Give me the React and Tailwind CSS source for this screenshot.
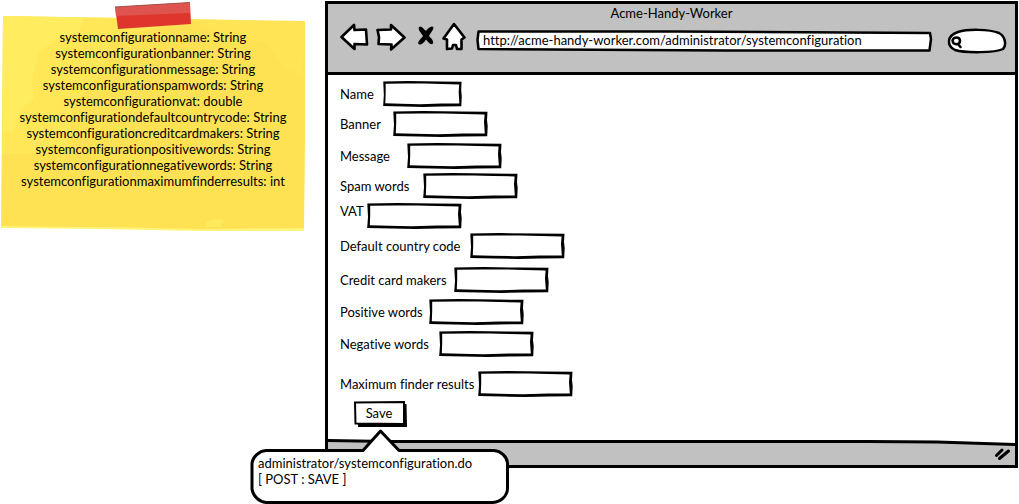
import React from "react";

const attributes = [
  "systemconfigurationname: String",
  "systemconfigurationbanner: String",
  "systemconfigurationmessage: String",
  "systemconfigurationspamwords: String",
  "systemconfigurationvat: double",
  "systemconfigurationdefaultcountrycode: String",
  "systemconfigurationcreditcardmakers: String",
  "systemconfigurationpositivewords: String",
  "systemconfigurationnegativewords: String",
  "systemconfigurationmaximumfinderresults: int",
];

const fields = [
  { id: "name", label: "Name", row: "items-center", labelWidth: "w-[43px]", inputWidth: "w-[79px]" },
  { id: "banner", label: "Banner", row: "mt-1 items-center", labelWidth: "w-[53px]", inputWidth: "w-[95px]" },
  { id: "message", label: "Message", row: "mt-1.5 items-center", labelWidth: "w-[67px]", inputWidth: "w-[95px]" },
  { id: "spam", label: "Spam words", row: "mt-1 items-center", labelWidth: "w-[83px]", inputWidth: "w-[95px]" },
  { id: "vat", label: "VAT", row: "mt-1 items-start", labelWidth: "w-[27px]", inputWidth: "w-[95px]" },
  { id: "country", label: "Default country code", row: "mt-1 items-center", labelWidth: "w-[130px]", inputWidth: "w-[95px]" },
  { id: "makers", label: "Credit card makers", row: "mt-2 items-center", labelWidth: "w-[114px]", inputWidth: "w-[95px]" },
  { id: "positive", label: "Positive words", row: "mt-1.5 items-center", labelWidth: "w-[89px]", inputWidth: "w-[95px]" },
  { id: "negative", label: "Negative words", row: "mt-1.5 items-center", labelWidth: "w-[99px]", inputWidth: "w-[95px]" },
  { id: "maximum", label: "Maximum finder results", row: "mt-3.5 items-center", labelWidth: "w-[138px]", inputWidth: "w-[95px]" },
];

function SketchFrame() {
  return (
    <svg className="absolute inset-0 h-full w-full" viewBox="0 0 95 26" preserveAspectRatio="none" aria-hidden="true">
      <path d="M.3 .5 30 0 68 .6 94.500 .8 94 9 94.700 15 94.200 25.200 70 25.400 48 26 25 25.600 .2 25 1 14Z" fill="#000" />
      <path d="M3.200 2.800 28 2.600 50 2.400 70 3 91.600 3.400 91 11 91.800 22.400 70 22.600 45 23.200 22 22.800 2.800 22.200 3.200 12Z" fill="#fff" />
    </svg>
  );
}

function StickyNote() {
  return (
    <section className="relative h-[231px] w-[306px] shrink-0">
      <svg className="absolute inset-0 h-full w-full" viewBox="0 0 306 231" aria-hidden="true">
        <path d="M3 15 120 17 305 20 305 140 304 229 200 229 100 227 1 226 2 120Z" fill="#ffe254" />
        <path d="M3 15 190 18 150 28 110 40 100 75 72 104 68 152 2 153Z" fill="#ffea59" opacity=".7" />
        <path d="M3 15 84 17 80 30 60 36 38 52 32 80 34 98 20 110 14 130 3 132Z" fill="#fff264" opacity=".6" />
        <path d="M190 18 304 21 303 76 284 66 266 42 225 36Z" fill="#ffe858" opacity=".5" />
        <path d="M1 225 70 226 100 226 200 228 304 227 304 230 200 230 100 228 1 227Z" fill="#fff47a" />
        <path d="M206 221 216 218 225 219 220 226 206 226Z" fill="#ffe95c" />
        <path d="M115 6 190 1.500 191 23 118 28 117 20Z" fill="#de352d" />
        <path d="M115 6 190 1.500 190 12 116 15Z" fill="#dd554e" />
        <path d="M115 6 190 1.500" stroke="#a6534e" strokeWidth="1" />
      </svg>
      <ul className="relative pt-[28px] text-center">
        {attributes.map((text) => (
          <li key={text} className="whitespace-nowrap">{text}</li>
        ))}
      </ul>
    </section>
  );
}

const navButtons = [
  {
    label: "Back",
    box: "w-[29px]",
    view: "0 0 29 30",
    drawing: <path d="M1.500 15 14 3 14.500 8 26 7.500 27 22.500 14.500 22 14.500 27Z" fill="#fff" stroke="#000" strokeWidth="2.600" strokeLinejoin="round" />,
  },
  {
    label: "Forward",
    box: "ml-[7px] w-[30px]",
    view: "0 0 30 30",
    drawing: <path d="M1.500 8 15 7.500 15 3 28.500 15.500 15 27.500 15.500 22.500 2.500 22 3 15Z" fill="#fff" stroke="#000" strokeWidth="2.600" strokeLinejoin="round" />,
  },
  {
    label: "Stop",
    box: "ml-[11px] w-[18px]",
    view: "0 0 18 30",
    drawing: <path d="M2 5C4 3 7 7 9 9C11 6 15 3 16.500 5.500C16.500 8 13.500 11 12 14C14 16 17 19 16 21.500C13.500 24 10.500 19 9 17.500C7.500 20 4 24 1.500 22C0 19.500 5 16 6 14C4 11 .5 7 2 5Z" fill="#000" />,
  },
  {
    label: "Home",
    box: "ml-[7px] w-[24px]",
    view: "0 0 24 30",
    drawing: <path d="M12 2 22.500 15.500 19.500 17.500 19.500 27 15 27 14 23 11 23 10 26.500 5 27 5 17.500 1.500 16.500Z" fill="#fff" stroke="#000" strokeWidth="2.600" strokeLinejoin="round" />,
  },
];

function BrowserHeader() {
  return (
    <header className="border-b-[3px] border-black bg-[#c1c1c1] pb-[18px]">
      <h1 className="pt-px text-center">Acme-Handy-Worker</h1>
      <div className="flex items-start pt-px pr-2 pl-3">
        {navButtons.map((item) => (
          <button key={item.label} type="button" aria-label={item.label} className={`h-[30px] shrink-0 ${item.box}`}>
            <svg className="h-full w-full" viewBox={item.view} aria-hidden="true">{item.drawing}</svg>
          </button>
        ))}
        <div className="relative mt-2 ml-2.5 h-[22px] min-w-0 flex-1">
          <svg className="absolute inset-0 h-full w-full" viewBox="0 0 456 22" preserveAspectRatio="none" aria-hidden="true">
            <path d="M2.500 1.500 200 1.500 453 3 454 9 452.500 20.500 250 20.500 2.500 19 1.500 10Z" fill="#fff" stroke="#000" strokeWidth="2.500" strokeLinejoin="round" />
          </svg>
          <input
            aria-label="Address"
            type="text"
            defaultValue="http://acme-handy-worker.com/administrator/systemconfiguration"
            className="relative block h-5 w-full bg-transparent px-[7px] text-[13px] leading-4 outline-none"
          />
        </div>
        <div className="relative mt-1.5 ml-[14px] h-[26px] w-[60px] shrink-0">
          <svg className="absolute inset-0 h-full w-full" viewBox="0 0 60 26" aria-hidden="true">
            <path d="M11 4C20 1 42 1 52 5C58 8 60 17 56 21C48 25 18 25 8 22C0 18-1 8 11 4Z" fill="#fff" stroke="#000" strokeWidth="2.500" />
            <path d="M5.500 12.500C6.500 8.500 12.500 8.500 13 12.500C13 17.500 6 17.500 5.500 12.500ZM11 16 13.500 19" fill="none" stroke="#000" strokeWidth="2.500" strokeLinecap="round" />
          </svg>
          <input aria-label="Search" type="search" className="relative h-full w-full bg-transparent pr-2 pl-5 outline-none" />
        </div>
      </div>
    </header>
  );
}

function ConfigurationForm() {
  return (
    <form className="pt-[6px] pb-[11px] pl-3" onSubmit={(event) => event.preventDefault()}>
      {fields.map((field) => (
        <div key={field.id} className={`flex ${field.row}`}>
          <label htmlFor={field.id} className={`shrink-0 whitespace-nowrap ${field.labelWidth}`}>{field.label}</label>
          <div className={`relative h-[26px] ${field.inputWidth}`}>
            <SketchFrame />
            <input id={field.id} type="text" className="relative h-full w-full bg-transparent px-2 outline-none" />
          </div>
        </div>
      ))}
      <div className="relative mt-1 ml-[14px] w-[53px]">
        <button type="submit" className="relative block h-[27px] w-full pr-[3px] pb-[3px]">
          <svg className="absolute inset-0 h-full w-full" viewBox="0 0 53 27" aria-hidden="true">
            <path d="M4 4 52.500 3 53 26 4 26Z" fill="#000" />
            <path d="M1 1.500 50 1 50 23 1.500 22.500Z" fill="#fff" stroke="#000" strokeWidth="2" />
          </svg>
          <span className="relative">Save</span>
        </button>
        <aside className="absolute top-[28px] left-[-104px] z-10 h-[75px] w-[260px] px-2 pt-[26px]">
          <svg className="absolute inset-0 h-full w-full" viewBox="0 0 260 75" aria-hidden="true">
            <path d="M16 21.500H113L130.500 2 149 21.500H244C251 22 257 28 257.500 34V60C257 67 251 73 243 73.500H16C9 73 3 67 2 60V34C3 28 9 22 16 21.500Z" fill="#fff" stroke="#000" strokeWidth="3" strokeLinejoin="round" />
          </svg>
          <p className="relative whitespace-nowrap">administrator/systemconfiguration.do</p>
          <p className="relative whitespace-nowrap">[ POST : SAVE ]</p>
        </aside>
      </div>
    </form>
  );
}

function StatusBar() {
  return (
    <footer className="relative flex h-[26px] items-end justify-end pr-1 pb-1">
      <svg className="absolute inset-0 h-full w-full" viewBox="0 0 688 26" preserveAspectRatio="none" aria-hidden="true">
        <path d="M0 1.500 60 2.500 540 2.500 610 3 688 5.500V26H0Z" fill="#c1c1c1" />
        <path d="M0 1.500 60 2.500 540 2.500 610 3 688 5.500" fill="none" stroke="#000" strokeWidth="3" />
      </svg>
      <svg className="relative h-[14px] w-[17px]" viewBox="0 0 17 14" aria-hidden="true">
        <path d="M2.500 8.500 8 3M5.500 11.500 14.500 4" stroke="#000" strokeWidth="3" strokeLinecap="round" />
      </svg>
    </footer>
  );
}

export default function App() {
  return (
    <div className="flex min-h-screen items-start gap-[19px] bg-white pt-px pr-px font-['Lato',sans-serif] text-[13px] leading-4 text-black [font-variant-ligatures:none]">
      <StickyNote />
      <main className="min-w-0 flex-1 border-[3px] border-black bg-white">
        <BrowserHeader />
        <ConfigurationForm />
        <StatusBar />
      </main>
    </div>
  );
}
